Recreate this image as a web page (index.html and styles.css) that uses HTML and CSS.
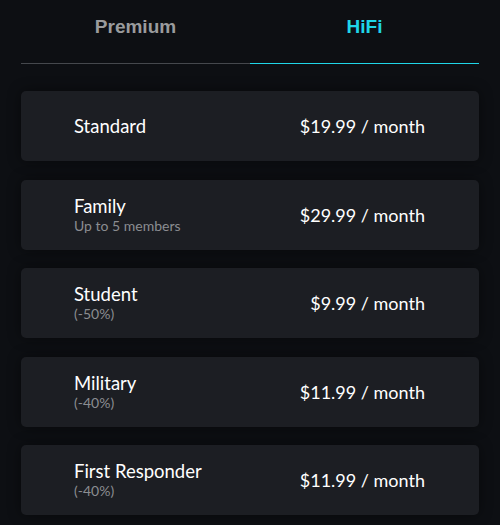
FILE: index.html
```html
<!DOCTYPE html>
<html lang="en">
<head>
<meta charset="utf-8">
<title>Plans</title>
<link rel="stylesheet" href="styles.css">
</head>
<body>
<div class="page">
  <div class="tabs">
    <div class="tab">Premium</div>
    <div class="tab active">HiFi</div>
  </div>
  <div class="plans">
    <div class="plan">
      <div class="info"><div class="name">Standard</div></div>
      <div class="price">$19.99 / month</div>
    </div>
    <div class="plan">
      <div class="info"><div class="name">Family</div><div class="sub">Up to 5 members</div></div>
      <div class="price">$29.99 / month</div>
    </div>
    <div class="plan">
      <div class="info"><div class="name">Student</div><div class="sub">(-50%)</div></div>
      <div class="price">$9.99 / month</div>
    </div>
    <div class="plan">
      <div class="info"><div class="name">Military</div><div class="sub">(-40%)</div></div>
      <div class="price">$11.99 / month</div>
    </div>
    <div class="plan">
      <div class="info"><div class="name">First Responder</div><div class="sub">(-40%)</div></div>
      <div class="price">$11.99 / month</div>
    </div>
  </div>
</div>
</body>
</html>
```
FILE: styles.css
```css
html, body {
  margin: 0;
  padding: 0;
  background: #0d0f13;
}
body {
  font-family: Lato, "Open Sans", sans-serif;
  color: #ffffff;
}
.page {
  padding: 0 21px;
  height: 525px;
  box-sizing: border-box;
  overflow: hidden;
}
.tabs {
  display: flex;
}
.tab {
  flex: 1;
  text-align: center;
  font-family: "Liberation Sans", Arial, sans-serif;
  font-weight: 700;
  font-size: 19px;
  line-height: 22px;
  color: #9a9b9d;
  padding-top: 16px;
  height: 64px;
  box-sizing: border-box;
  border-bottom: 1px solid #45484d;
}
.tab.active {
  color: #1fd6e8;
  border-bottom-color: #1fd6e8;
}
.plans {
  margin-top: 27px;
  display: flex;
  flex-direction: column;
  gap: 18.5px;
}
.plan {
  height: 70px;
  background: #1c1e23;
  border-radius: 5px;
  box-shadow: 0 0 14px rgba(0, 0, 0, 0.45);
  display: flex;
  align-items: center;
  justify-content: space-between;
  padding: 0 54px 0 53px;
}
.name {
  font-size: 18.5px;
  line-height: 21px;
  color: #ffffff;
}
.sub {
  font-size: 14px;
  line-height: 17px;
  color: #8b8d91;
}
.price {
  font-size: 18px;
  color: #ffffff;
}
```
